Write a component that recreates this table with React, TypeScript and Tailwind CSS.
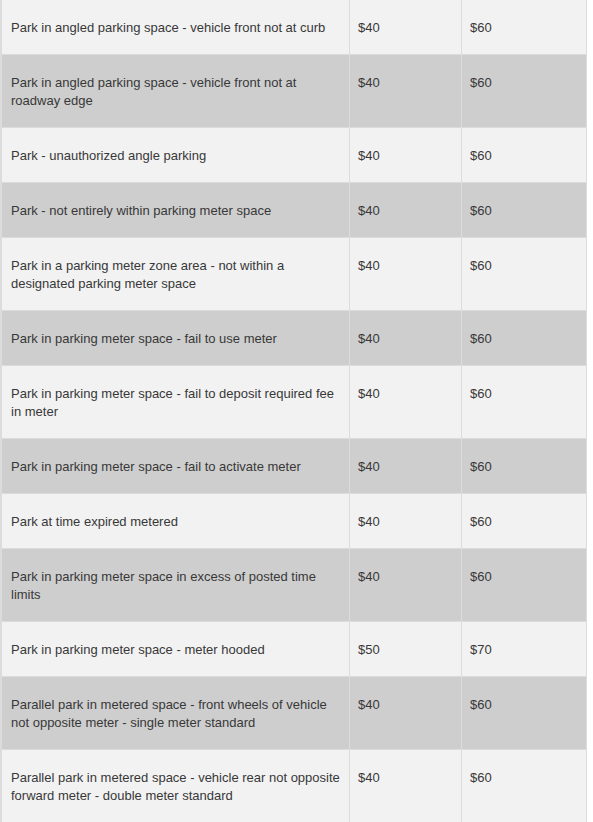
const rows: [string, string, string][] = [
  ["Park in angled parking space - vehicle front not at curb", "$40", "$60"],
  ["Park in angled parking space - vehicle front not at roadway edge", "$40", "$60"],
  ["Park - unauthorized angle parking", "$40", "$60"],
  ["Park - not entirely within parking meter space", "$40", "$60"],
  ["Park in a parking meter zone area - not within a designated parking meter space", "$40", "$60"],
  ["Park in parking meter space - fail to use meter", "$40", "$60"],
  ["Park in parking meter space - fail to deposit required fee in meter", "$40", "$60"],
  ["Park in parking meter space - fail to activate meter", "$40", "$60"],
  ["Park at time expired metered", "$40", "$60"],
  ["Park in parking meter space in excess of posted time limits", "$40", "$60"],
  ["Park in parking meter space - meter hooded", "$50", "$70"],
  ["Parallel park in metered space - front wheels of vehicle not opposite meter - single meter standard", "$40", "$60"],
  ["Parallel park in metered space - vehicle rear not opposite forward meter - double meter standard", "$40", "$60"],
];

export default function App() {
  return (
    <div className="w-[593px] h-[822px] overflow-hidden bg-white font-['Liberation_Sans',Arial,sans-serif] text-[13px] leading-[18px] text-[#383838]">
      <div className="w-[587px] border-l-2 border-r border-[#dcdcdc]">
        {rows.map(([desc, fine, late], i) => (
          <div
            key={i}
            className={
              "flex border-b border-[#dcdcdc] " +
              (i % 2 === 0 ? "bg-[#f2f2f2]" : "bg-[#cecece]")
            }
          >
            <div className="w-[348px] shrink-0 border-r border-[#dcdcdc] pl-[9px] pr-[8px] pt-[19px] pb-[17px]">
              {desc}
            </div>
            <div className="w-[112px] shrink-0 border-r border-[#dcdcdc] px-[8px] pt-[19px] pb-[17px]">
              {fine}
            </div>
            <div className="flex-1 px-[8px] pt-[19px] pb-[17px]">{late}</div>
          </div>
        ))}
      </div>
    </div>
  );
}
